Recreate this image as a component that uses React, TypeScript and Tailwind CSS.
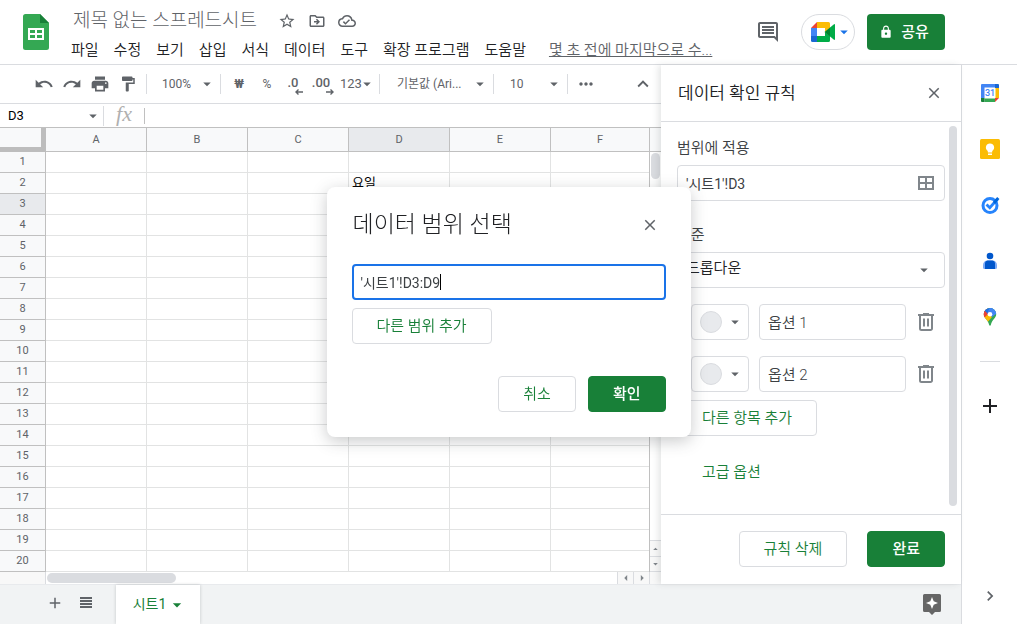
import type { ReactNode } from "react";
import {
  MdAdd,
  MdArrowDropDown,
  MdArrowDropUp,
  MdArrowLeft,
  MdArrowRight,
  MdChevronRight,
  MdClose,
  MdExpandLess,
  MdFormatPaint,
  MdLock,
  MdMoreHoriz,
  MdOutlineCloudDone,
  MdOutlineComment,
  MdOutlineDriveFileMove,
  MdPrint,
  MdRedo,
  MdStarBorder,
  MdUndo
} from "react-icons/md";

const MENUS = ["파일", "수정", "보기", "삽입", "서식", "데이터", "도구", "확장 프로그램", "도움말"];
const COLUMNS = ["A", "B", "C", "D", "E", "F"];
const ROWS = Array.from({ length: 20 }, (_, index) => index + 1);
const CELLS: Record<string, string> = { D2: "요일" };
const ACTIVE = { column: "D", row: 3 };
const OPTIONS = ["옵션 1", "옵션 2"];

type ButtonProps = {
  children: ReactNode;
  primary?: boolean;
};

function Button({ children, primary = false }: ButtonProps) {
  return (
    <button
      type="button"
      className={
        primary
          ? "flex h-9 shrink-0 items-center gap-2 rounded border border-[#188038] bg-[#188038] px-6 text-[15px] leading-5 font-medium text-white"
          : "flex h-9 shrink-0 items-center rounded border border-[#dadce0] bg-white px-6 text-[15px] leading-5 font-[350] text-[#188038]"
      }
    >
      {children}
    </button>
  );
}

function IconButton({ label, children }: { label: string; children: ReactNode }) {
  return (
    <button type="button" aria-label={label} className="flex size-7 shrink-0 items-center justify-center text-[#5f6368]">
      {children}
    </button>
  );
}

function Separator() {
  return <div className="h-5 w-px shrink-0 bg-[#dadce0]" />;
}

function SheetsLogo() {
  return (
    <svg viewBox="0 0 26 36" className="h-9 w-[26px] shrink-0">
      <path d="M2.500 0H17l9 9v24.500a2.500 2.500 0 0 1-2.500 2.500h-21A2.500 2.500 0 0 1 0 33.500v-31A2.500 2.500 0 0 1 2.500 0z" fill="#34a853" />
      <path d="M17 0l9 9h-9z" fill="#188038" />
      <path d="M5 14h16v12H5zM7 16v3h5v-3zM14 16v3h5v-3zM7 21v3h5v-3zM14 21v3h5v-3z" fill="#fff" fillRule="evenodd" />
    </svg>
  );
}

function MeetLogo() {
  return (
    <svg viewBox="0 0 24 20" className="h-5 w-6">
      <path d="M0 6h6v8H0z" fill="#4285f4" />
      <path d="M6 0v6H0z" fill="#ea4335" />
      <path d="M6 0h11.500A1.500 1.500 0 0 1 19 1.500V6l-5 4V6H6z" fill="#fbbc04" />
      <path d="M0 14h6v6H1.500A1.500 1.500 0 0 1 0 18.500z" fill="#1967d2" />
      <path d="M6 14h8v-4l5 4v4.500a1.500 1.500 0 0 1-1.500 1.500H6z" fill="#00ac47" />
      <path d="M13.500 10L19 5.500v9z" fill="#00832d" />
      <path d="M19 5.500l4-3.300c.4-.3 1-.1 1 .5v14.600c0 .6-.6.8-1 .5l-4-3.300z" fill="#00ac47" />
    </svg>
  );
}

function TableIcon() {
  return (
    <svg viewBox="0 0 16 14" className="h-[14px] w-4 fill-none stroke-[#80868b] stroke-2">
      <path d="M1 1h14v12H1zM8 1v12M1 7h14" />
    </svg>
  );
}

function TrashIcon() {
  return (
    <svg viewBox="0 0 16 18" className="h-[18px] w-4 fill-none stroke-[#80868b] stroke-2">
      <path d="M0 2h16M5 1h6M2 2v13.500A1.500 1.500 0 0 0 3.500 17h9a1.500 1.500 0 0 0 1.500-1.500V2M6 5.500v8M10 5.500v8" />
    </svg>
  );
}

function DecimalIcon({ text, direction }: { text: string; direction: "left" | "right" }) {
  return (
    <span className="flex flex-col items-end pt-1">
      <span className="pr-1 text-[13px] leading-3 font-medium">{text}</span>
      <svg viewBox="0 0 8 6" className="h-[6px] w-2 fill-none stroke-[#5f6368] stroke-[1.400]">
        {direction === "left" ? <path d="M8 3H1M3.500.5L1 3l2.500 2.500" /> : <path d="M0 3h7M4.500.5L7 3 4.500 5.500" />}
      </svg>
    </span>
  );
}

function ListIcon() {
  return (
    <svg viewBox="0 0 12 11" className="h-[11px] w-3 fill-none stroke-[#5f6368] stroke-2">
      <path d="M0 1h12M0 4h12M0 7h12M0 10h12" />
    </svg>
  );
}

function ExploreIcon() {
  return (
    <svg viewBox="0 0 18 21" className="h-[21px] w-[18px]">
      <path d="M1.500 0h15A1.500 1.500 0 0 1 18 1.500v15a1.500 1.500 0 0 1-1.500 1.500H12l-3 3-3-3H1.500A1.500 1.500 0 0 1 0 16.500v-15A1.500 1.500 0 0 1 1.500 0z" fill="#666" />
      <path d="M9 3l1.700 4.300L15 9l-4.300 1.700L9 15l-1.700-4.300L3 9l4.300-1.700z" fill="#fff" />
    </svg>
  );
}

function CalendarLogo() {
  return (
    <svg viewBox="0 0 20 20" className="size-5">
      <path d="M4 4h12v12H4z" fill="#fff" />
      <path d="M2 1h13v3.500H4.500V15H1V2a1 1 0 0 1 1-1z" fill="#4285f4" />
      <path d="M15 1h3a1 1 0 0 1 1 1v3h-4z" fill="#1967d2" />
      <path d="M15.500 5H19v10h-3.500z" fill="#fbbc04" />
      <path d="M4.500 15.500H15V19H4.500z" fill="#34a853" />
      <path d="M1 15h3.500v4H2a1 1 0 0 1-1-1z" fill="#188038" />
      <path d="M15 15h4l-4 4z" fill="#ea4335" />
      <text x="10" y="13" textAnchor="middle" fontSize="9" fontWeight="500" fill="#4285f4">
        31
      </text>
    </svg>
  );
}

function KeepLogo() {
  return (
    <svg viewBox="0 0 20 20" className="size-5">
      <rect width="20" height="20" rx="1.500" fill="#fbbc04" />
      <path d="M10 4.500a4 4 0 0 0-2.200 7.400v1.600h4.400v-1.600A4 4 0 0 0 10 4.500z" fill="#fff" />
      <path d="M8 14.500h4V16H8z" fill="#fff" />
    </svg>
  );
}

function TasksLogo() {
  return (
    <svg viewBox="0 0 20 20" className="size-5 fill-none">
      <circle cx="10" cy="10.500" r="7" stroke="#2684fc" strokeWidth="3" />
      <path d="M6.500 9.500l3.300 3.300 7.500-8.500" stroke="#2684fc" strokeWidth="2.800" />
      <path d="M14 8l4.300-4.900" stroke="#0066da" strokeWidth="3" />
    </svg>
  );
}

function ContactsLogo() {
  return (
    <svg viewBox="0 0 20 20" className="size-5">
      <circle cx="10" cy="5" r="3.300" fill="#0057cc" />
      <path d="M3 14a4.500 4.500 0 0 1 4.500-4.500h5A4.500 4.500 0 0 1 17 14v2.500a1.500 1.500 0 0 1-1.500 1.500h-11A1.500 1.500 0 0 1 3 16.500z" fill="#7baaf7" />
      <path d="M5 12a3 3 0 0 1 2.500-2.500h5A3 3 0 0 1 15 12v6H5z" fill="#0057cc" />
    </svg>
  );
}

function MapsLogo() {
  return (
    <svg viewBox="0 0 20 20" className="size-5">
      <clipPath id="pin">
        <path d="M10 1a6.200 6.200 0 0 0-6.200 6.200c0 4 4.300 5.300 5.400 10.800.2 1 1.400 1 1.600 0 1.100-5.500 5.400-6.800 5.400-10.800A6.200 6.200 0 0 0 10 1z" />
      </clipPath>
      <g clipPath="url(#pin)">
        <path d="M0 0h20v20H0z" fill="#34a853" />
        <path d="M0 0h7l3 7-7 7H0z" fill="#ea4335" />
        <path d="M3 0h12L7 8 2.500 4z" fill="#1a73e8" />
        <path d="M10 0h10v4l-8 6-5-3z" fill="#4285f4" />
        <path d="M8 7l4 3-6 7-4-5z" fill="#fbbc04" />
        <path d="M0 4l4-1 4 4-5 5H0z" fill="#ea4335" />
      </g>
      <circle cx="10" cy="7.200" r="2.300" fill="#fff" />
    </svg>
  );
}

const RAIL_APPS = [
  { label: "Calendar", icon: CalendarLogo },
  { label: "Keep", icon: KeepLogo },
  { label: "Tasks", icon: TasksLogo },
  { label: "주소록", icon: ContactsLogo },
  { label: "지도", icon: MapsLogo }
];

function Header() {
  return (
    <header className="flex h-[65px] shrink-0 items-start border-b border-[#dadce0] pt-[14px] pr-[72px] pl-[23px]">
      <SheetsLogo />
      <div className="-mt-1.5 ml-[22px] flex min-w-0 flex-1 flex-col">
        <div className="flex h-6 items-center text-[#5f6368]">
          <h1 className="mr-4 pt-0.5 pl-0.5 text-[19px] leading-6 font-light whitespace-nowrap">제목 없는 스프레드시트</h1>
          <div className="flex items-center gap-0.5 pt-0.5">
            <IconButton label="별표">
              <MdStarBorder size={18} />
            </IconButton>
            <IconButton label="이동">
              <MdOutlineDriveFileMove size={18} />
            </IconButton>
            <IconButton label="문서 상태 보기">
              <MdOutlineCloudDone size={18} />
            </IconButton>
          </div>
        </div>
        <nav className="mt-1.5 flex h-6 items-center gap-[15px] text-[15px] font-[350] whitespace-nowrap text-[#202124]">
          {MENUS.map((menu) => (
            <button key={menu} type="button">
              {menu}
            </button>
          ))}
          <a href="#history" className="ml-2 text-[#5f6368] underline">
            몇 초 전에 마지막으로 수...
          </a>
        </nav>
      </div>
      <div className="flex h-9 shrink-0 items-center">
        <button type="button" aria-label="댓글 기록 열기" className="mr-[21px] text-[#5f6368]">
          <MdOutlineComment size={24} />
        </button>
        <button
          type="button"
          aria-label="Meet"
          className="mr-3 flex h-9 w-[54px] items-center justify-center rounded-full border border-[#dadce0] pl-2 text-[#1a73e8]"
        >
          <MeetLogo />
          <MdArrowDropDown size={18} />
        </button>
        <button
          type="button"
          className="flex h-9 w-[78px] items-center justify-center gap-2 rounded bg-[#188038] pr-1 text-[15px] font-medium text-white"
        >
          <MdLock size={14} />
          공유
        </button>
      </div>
    </header>
  );
}

type ToolbarSelectProps = {
  label: string;
  value: string;
  className: string;
};

function ToolbarSelect({ label, value, className }: ToolbarSelectProps) {
  return (
    <div className={className}>
      <select aria-label={label} className="min-w-0 flex-1 appearance-none bg-transparent text-[12px] leading-5">
        <option>{value}</option>
      </select>
      <MdArrowDropDown size={18} className="pointer-events-none shrink-0" />
    </div>
  );
}

function Toolbar() {
  return (
    <div className="flex h-[39px] shrink-0 items-center border-b border-[#dadce0] pr-1 pl-[30px] text-[#5f6368]">
      <IconButton label="실행취소">
        <MdUndo size={20} />
      </IconButton>
      <IconButton label="재실행">
        <MdRedo size={20} />
      </IconButton>
      <IconButton label="인쇄">
        <MdPrint size={20} />
      </IconButton>
      <IconButton label="서식 복사">
        <MdFormatPaint size={18} />
      </IconButton>
      <div className="w-1" />
      <Separator />
      <ToolbarSelect label="확대/축소" value="100%" className="flex w-[73px] shrink-0 items-center pr-1 pl-[15px]" />
      <Separator />
      <div className="w-1" />
      <IconButton label="통화 형식">
        <span className="text-[12px] font-bold">₩</span>
      </IconButton>
      <IconButton label="퍼센트 형식">
        <span className="text-[12px]">%</span>
      </IconButton>
      <IconButton label="소수점 이하 자릿수 감소">
        <DecimalIcon text=".0" direction="left" />
      </IconButton>
      <IconButton label="소수점 이하 자릿수 증가">
        <DecimalIcon text=".00" direction="right" />
      </IconButton>
      <button type="button" className="flex w-[42px] shrink-0 items-center pl-[3px] text-[13px]">
        123
        <MdArrowDropDown size={18} className="-ml-1 shrink-0" />
      </button>
      <Separator />
      <ToolbarSelect label="글꼴" value="기본값 (Ari..." className="flex w-[113px] shrink-0 items-center pr-1 pl-[17px]" />
      <Separator />
      <ToolbarSelect label="글꼴 크기" value="10" className="flex w-[73px] shrink-0 items-center pr-1 pl-4" />
      <Separator />
      <div className="w-1" />
      <IconButton label="더보기">
        <MdMoreHoriz size={20} />
      </IconButton>
      <div className="flex-1" />
      <IconButton label="메뉴 숨기기">
        <MdExpandLess size={22} />
      </IconButton>
    </div>
  );
}

function FormulaBar() {
  return (
    <div className="flex h-6 shrink-0 items-center border-b border-[#c0c0c0]">
      <input aria-label="이름 상자" defaultValue="D3" className="w-[84px] pl-2 text-[13px] leading-5 text-black" />
      <MdArrowDropDown size={18} className="mr-px text-[#5f6368]" />
      <Separator />
      <span className="w-10 pb-1 text-center font-['Liberation_Serif'] text-[22px] leading-5 text-[#b0b0b0] italic">fx</span>
      <div className="h-4 w-px bg-[#c0c0c0]" />
      <input aria-label="수식 입력줄" className="min-w-0 flex-1 px-2 text-[13px] leading-5" />
    </div>
  );
}

function Grid() {
  return (
    <div className="flex">
      <div className="min-w-0 flex-1 overflow-hidden border-r border-[#c0c0c0]">
        <table className="w-full table-fixed border-separate border-spacing-0 text-[11px] leading-4 text-[#5f6368]">
          <thead>
            <tr className="h-6">
              <td className="h-6 w-[46px] border-r-[5px] border-b-[5px] border-[#bdbdbd] bg-[#f8f9fa] p-0" />
              {COLUMNS.map((column) => (
                <th
                  key={column}
                  className={
                    column === ACTIVE.column
                      ? "w-[101px] border-r border-b border-[#c0c0c0] bg-[#e8eaed] p-0 font-normal"
                      : "w-[101px] border-r border-b border-[#c0c0c0] bg-[#f8f9fa] p-0 font-normal last:w-auto last:border-r-0"
                  }
                >
                  {column}
                </th>
              ))}
            </tr>
          </thead>
          <tbody>
            {ROWS.map((row) => (
              <tr key={row} className="h-[21px]">
                <th
                  className={
                    row === ACTIVE.row
                      ? "h-[21px] border-r border-b border-[#c0c0c0] bg-[#e8eaed] p-0 font-normal"
                      : "h-[21px] border-r border-b border-[#c0c0c0] bg-[#f8f9fa] p-0 font-normal"
                  }
                >
                  {row}
                </th>
                {COLUMNS.map((column) => (
                  <td
                    key={column}
                    className="border-r border-b border-[#e2e3e3] p-0 pl-[3px] text-[13px] text-black last:border-r-0"
                  >
                    {CELLS[`${column}${row}`]}
                  </td>
                ))}
              </tr>
            ))}
          </tbody>
        </table>
      </div>
      <div className="flex w-[11px] shrink-0 flex-col">
        <div className="h-6 border-b border-[#c0c0c0] bg-[#f8f9fa]" />
        <div className="mx-px mt-px h-[26px] rounded-full bg-[#dadce0]" />
        <div className="flex-1" />
        <div className="flex h-4 items-center justify-center border-t border-[#dadce0] bg-[#f8f8f8] text-[#80868b]">
          <MdArrowDropUp size={14} />
        </div>
        <div className="flex h-4 items-center justify-center border-y border-[#dadce0] bg-[#f8f8f8] text-[#80868b]">
          <MdArrowDropDown size={14} />
        </div>
      </div>
    </div>
  );
}

function HorizontalScrollbar() {
  return (
    <div className="flex h-3 items-stretch">
      <div className="w-[46px] border-r border-[#dadce0] bg-[#f8f8f8]" />
      <div className="my-px ml-px w-[129px] rounded-full bg-[#dadce0]" />
      <div className="flex-1" />
      <div className="flex w-4 items-center justify-center border-l border-[#dadce0] bg-[#f8f8f8] text-[#80868b]">
        <MdArrowLeft size={14} />
      </div>
      <div className="flex w-[17px] items-center justify-center border-x border-[#dadce0] bg-[#f8f8f8] text-[#80868b]">
        <MdArrowRight size={14} />
      </div>
      <div className="w-[11px] bg-[#f8f8f8]" />
    </div>
  );
}

function ValidationPanel() {
  return (
    <aside className="relative z-10 flex w-[300px] shrink-0 flex-col bg-white shadow-[-3px_0_6px_rgba(60,64,67,0.12)]">
      <div className="flex h-[57px] items-center justify-between border-b border-[#dadce0] pr-[13px] pl-[17px]">
        <h2 className="text-[17px] leading-6 font-[350] text-[#202124]">데이터 확인 규칙</h2>
        <IconButton label="닫기">
          <MdClose size={18} />
        </IconButton>
      </div>
      <div className="flex flex-1 pr-1 pl-4">
        <div className="flex min-w-0 flex-1 flex-col pt-4 text-[15px] leading-5 text-[#3c4043]">
          <label htmlFor="apply-range" className="mb-[7px] font-[350]">
            범위에 적용
          </label>
          <div className="mr-1 flex h-9 items-center rounded border border-[#dadce0] pr-[10px] pl-2">
            <input id="apply-range" defaultValue="'시트1'!D3" className="min-w-0 flex-1 pt-0.5 text-[14px]" />
            <button type="button" aria-label="데이터 범위 선택">
              <TableIcon />
            </button>
          </div>
          <label htmlFor="criteria" className="mt-6 mb-[7px] font-[350]">
            기준
          </label>
          <div className="mr-1 flex h-9 items-center rounded border border-[#dadce0] pr-[11px] pb-1 pl-2 text-[#202124]">
            <select id="criteria" className="min-w-0 flex-1 appearance-none bg-transparent font-[350]">
              <option>드롭다운</option>
            </select>
            <MdArrowDropDown size={18} className="pointer-events-none mt-1 text-[#5f6368]" />
          </div>
          {OPTIONS.map((option) => (
            <div key={option} className="mt-4 mr-1 flex items-center pl-[14px]">
              <button
                type="button"
                aria-label="색상"
                className="mr-[10px] flex h-9 w-[58px] items-center justify-end gap-1 rounded border border-[#dadce0] pr-1 text-[#5f6368]"
              >
                <span className="size-[22px] rounded-full border border-[#dadce0] bg-[#e8eaed]" />
                <MdArrowDropDown size={18} />
              </button>
              <input
                aria-label={option}
                defaultValue={option}
                className="h-9 min-w-0 flex-1 rounded border border-[#dadce0] px-2 pb-0.5 font-[350]"
              />
              <button type="button" aria-label="삭제" className="flex w-[39px] justify-center">
                <TrashIcon />
              </button>
            </div>
          ))}
          <div className="mt-2 mb-[18px] flex">
            <Button>다른 항목 추가</Button>
          </div>
          <button type="button" className="h-9 self-start px-[25px] font-[350] text-[#188038]">
            고급 옵션
          </button>
        </div>
        <div className="mt-1 mb-2 w-2 rounded-full bg-[#dadce0]" />
      </div>
      <div className="flex h-[70px] items-start justify-end gap-5 border-t border-[#dadce0] pt-4 pr-4">
        <Button>규칙 삭제</Button>
        <Button primary>완료</Button>
      </div>
    </aside>
  );
}

function SheetTabs() {
  return (
    <footer className="flex h-10 shrink-0 items-center border-t border-[#e8eaed] bg-[#f1f3f4] pr-[15px] pl-10 text-[#5f6368]">
      <button type="button" aria-label="시트 추가" className="flex w-[30px] justify-center pb-1">
        <MdAdd size={18} />
      </button>
      <button type="button" aria-label="모든 시트" className="flex w-8 justify-center pb-1">
        <ListIcon />
      </button>
      <button
        type="button"
        className="ml-[14px] flex h-full w-[84px] items-center justify-center gap-px bg-white pl-1 text-[14px] text-[#188038] shadow-[0_0_3px_rgba(60,64,67,0.25)]"
      >
        시트1
        <MdArrowDropDown size={20} />
      </button>
      <div className="flex-1" />
      <IconButton label="탐색">
        <ExploreIcon />
      </IconButton>
    </footer>
  );
}

function SideRail() {
  return (
    <aside className="flex w-14 shrink-0 flex-col items-center border-l border-[#dadce0]">
      {RAIL_APPS.map((app) => {
        const Logo = app.icon;

        return (
          <button key={app.label} type="button" aria-label={app.label} className="flex h-14 w-full items-center justify-center">
            <Logo />
          </button>
        );
      })}
      <div className="my-4 h-px w-5 bg-[#dadce0]" />
      <button type="button" aria-label="부가기능 설치하기" className="flex h-14 w-full items-center justify-center text-[#202124]">
        <MdAdd size={24} />
      </button>
      <div className="flex-1" />
      <button type="button" aria-label="측면 패널 숨기기" className="flex h-14 w-full items-center justify-center text-[#5f6368]">
        <MdChevronRight size={20} />
      </button>
    </aside>
  );
}

function RangeDialog() {
  return (
    <div className="fixed inset-0 z-20 flex items-center justify-center">
      <div
        role="dialog"
        aria-labelledby="range-title"
        className="w-[364px] rounded-lg bg-white p-[25px] shadow-[0_4px_16px_rgba(60,64,67,0.28)]"
      >
        <div className="mb-[26px] flex h-[26px] items-center justify-between">
          <h2 id="range-title" className="pl-px text-[23px] leading-6 font-light text-[#202124]">
            데이터 범위 선택
          </h2>
          <button type="button" aria-label="닫기" className="mr-[7px] text-[#5f6368]">
            <MdClose size={18} />
          </button>
        </div>
        <div className="flex h-9 items-center rounded border-2 border-[#1a73e8] px-[7px] text-[14px] leading-5 text-[#3c4043]">
          <input
            aria-label="데이터 범위"
            defaultValue="'시트1'!D3:D9"
            className="field-sizing-content pt-0.5 caret-transparent outline-none"
          />
          <span className="h-4 w-px bg-black" />
        </div>
        <div className="mt-2 mb-8 flex">
          <Button>다른 범위 추가</Button>
        </div>
        <div className="flex justify-end gap-3">
          <Button>취소</Button>
          <Button primary>확인</Button>
        </div>
      </div>
    </div>
  );
}

export default function App() {
  return (
    <div className="flex min-h-screen flex-col overflow-hidden bg-white font-[Roboto,'Noto_Sans_CJK_KR',sans-serif]">
      <Header />
      <div className="flex flex-1">
        <main className="flex min-w-0 flex-1 flex-col">
          <div className="flex flex-1">
            <section className="flex min-w-0 flex-1 flex-col">
              <Toolbar />
              <FormulaBar />
              <Grid />
              <HorizontalScrollbar />
            </section>
            <ValidationPanel />
          </div>
          <SheetTabs />
        </main>
        <SideRail />
      </div>
      <RangeDialog />
    </div>
  );
}
